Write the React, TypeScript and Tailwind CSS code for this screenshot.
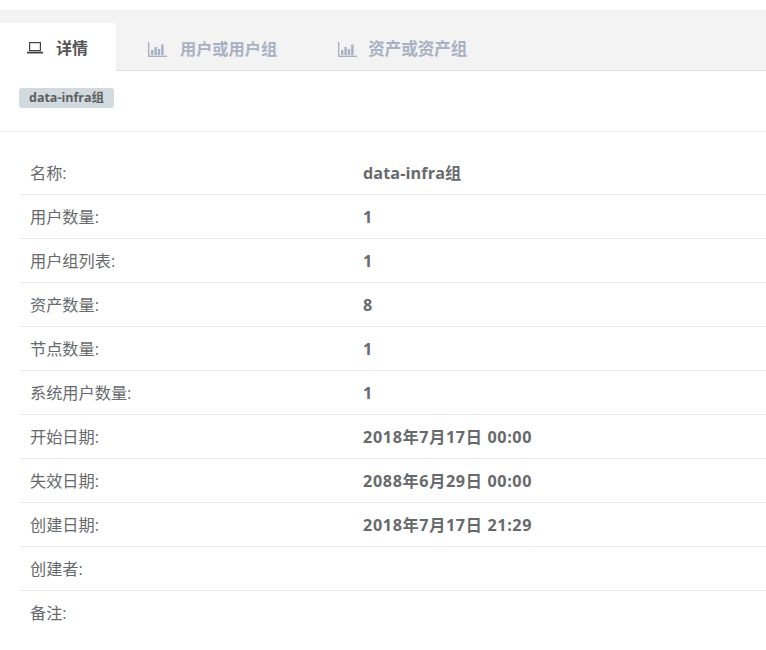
const FONT = "font-['Open_Sans','Noto_Sans_CJK_SC',sans-serif]";

const rows = [
  { label: '名称:', value: 'data-infra组', track: 'tracking-[0.1px]' },
  { label: '用户数量:', value: '1', track: '' },
  { label: '用户组列表:', value: '1', track: '' },
  { label: '资产数量:', value: '8', track: '' },
  { label: '节点数量:', value: '1', track: '' },
  { label: '系统用户数量:', value: '1', track: '' },
  { label: '开始日期:', value: '2018年7月17日 00:00', track: 'tracking-[0.62px]' },
  { label: '失效日期:', value: '2088年6月29日 00:00', track: 'tracking-[0.62px]' },
  { label: '创建日期:', value: '2018年7月17日 21:29', track: 'tracking-[0.62px]' },
  { label: '创建者:', value: '', track: '' },
  { label: '备注:', value: '', track: '' },
];

function LaptopIcon() {
  return (
    <svg width="16" height="12" viewBox="0 0 16 12" fill="none" stroke="#444" strokeWidth="1.2">
      <rect x="2.6" y="0.6" width="10.8" height="8" />
      <path d="M0 10.6h16" strokeWidth="1.8" />
    </svg>
  );
}

function BarIcon() {
  return (
    <svg width="19" height="15" viewBox="0 0 19 15" fill="#a7b1c2" stroke="none">
      <rect x="0" y="0" width="1.4" height="15" />
      <rect x="0" y="13.6" width="19" height="1.4" />
      <rect x="3" y="8" width="2.4" height="5" />
      <rect x="6.4" y="5" width="2.4" height="8" />
      <rect x="9.8" y="7" width="2.4" height="6" />
      <rect x="13.2" y="2.5" width="2.4" height="10.5" />
    </svg>
  );
}

function Tab({ label, className }: { label: string; className: string }) {
  return (
    <div className={`flex items-center pt-[5px] font-bold text-[#a7b1c2] ${className}`}>
      <BarIcon />
      <span>{label}</span>
    </div>
  );
}

export default function App() {
  return (
    <div className={`${FONT} h-[650px] w-[766px] overflow-hidden bg-white pt-[10px] text-[#676a6c]`}>
      {/* Tabs */}
      <div className="flex h-[61px] items-end border-t border-b border-t-[#eeeeee] border-b-[#dcdcdc] bg-[#f3f3f4]">
        <div className="-mb-px flex h-[48px] w-[116px] items-center gap-[13px] bg-white pl-[27px] pt-[2px] text-base font-bold text-[#555555]">
          <LaptopIcon />
          <span>详情</span>
        </div>
        <Tab label="用户或用户组" className="ml-[32px] h-[47px] gap-[13px] text-[16.2px]" />
        <Tab label="资产或资产组" className="ml-[61px] h-[47px] gap-[11px] text-[16.5px]" />
      </div>

      {/* Title */}
      <div className="h-[61px] border-b border-[#eeeeee] pl-[19px] pt-[17px]">
        <span className="flex h-[20px] w-[95px] items-center justify-center rounded-[3px] bg-[#d1dade] text-[12.5px] font-bold text-[#5e5e5e]">
          data-infra组
        </span>
      </div>

      {/* Details */}
      <div className="pl-[20px] pt-[19px]">
        {rows.map((row, i) => (
          <div
            key={row.label}
            className={`flex h-[44px] items-center text-[16.2px] ${i < rows.length - 1 ? 'border-b border-[#e7eaec] pt-[2px]' : ''}`}
          >
            <div className="w-[343px] pl-[10px]">{row.label}</div>
            <div className={`font-bold ${row.track}`}>{row.value}</div>
          </div>
        ))}
      </div>
    </div>
  );
}
